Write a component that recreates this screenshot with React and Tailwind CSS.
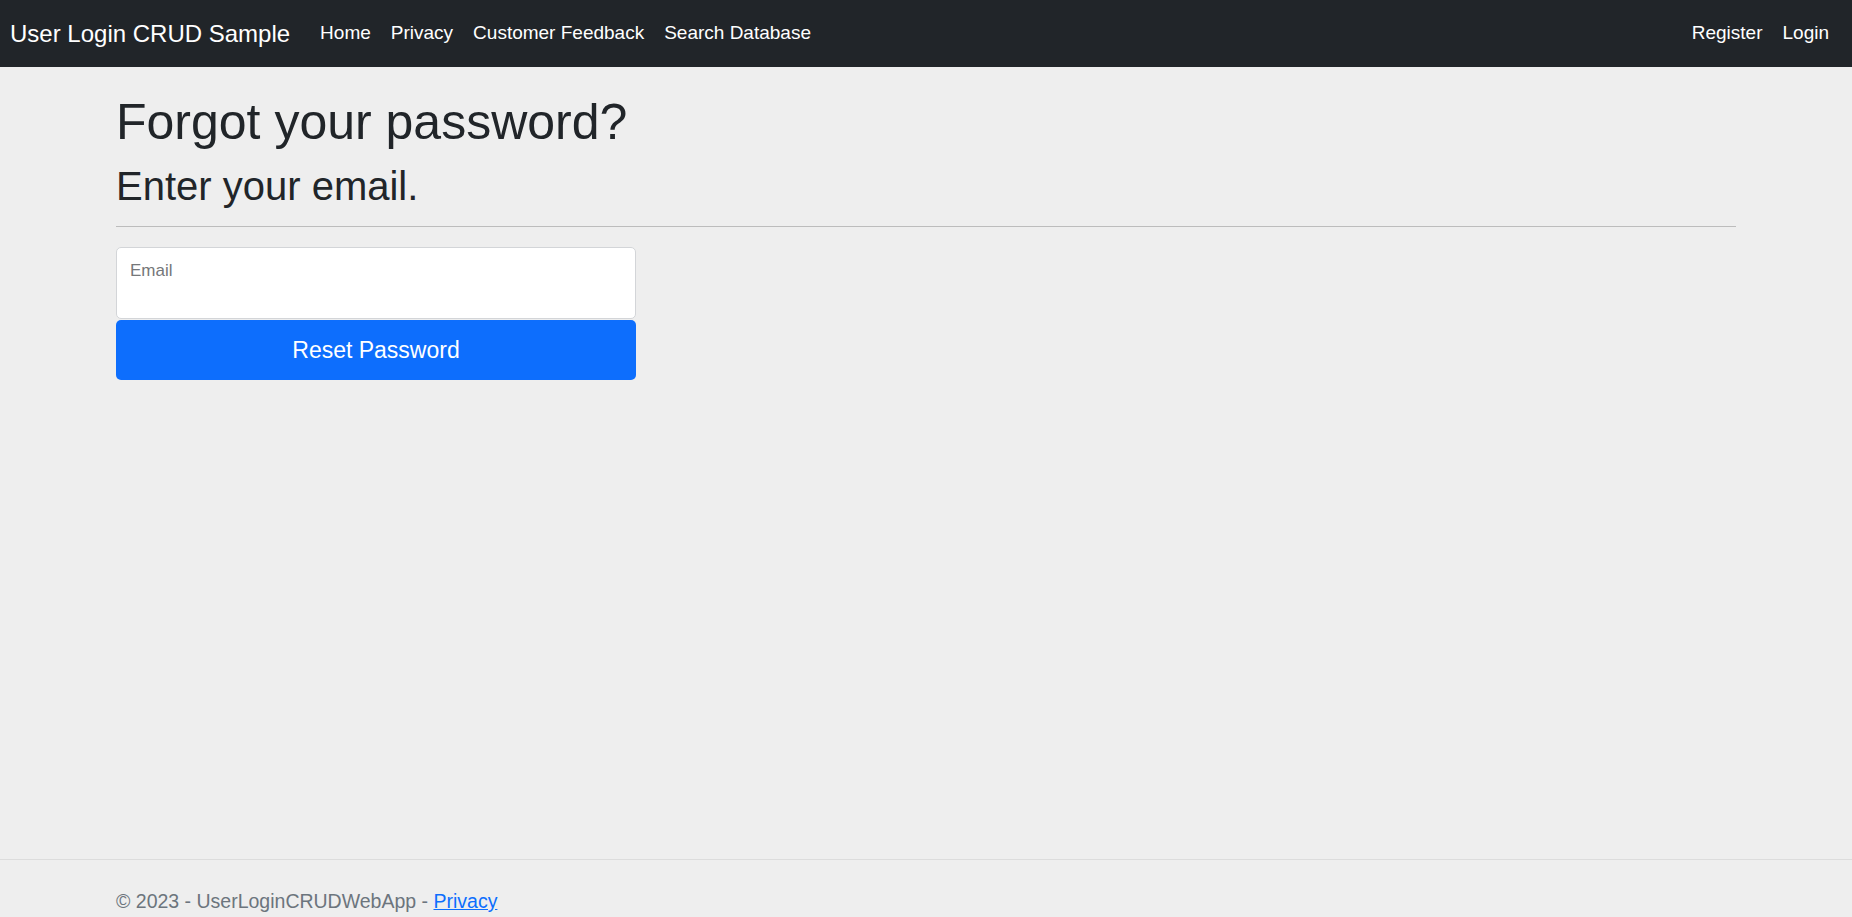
import { useState } from "react";

const navLinks = ["Home", "Privacy", "Customer Feedback", "Search Database"];

export default function App() {
  const [email, setEmail] = useState("");

  return (
    <div className="h-[917px] overflow-hidden bg-[#eeeeee] font-['Liberation_Sans',Arial,sans-serif] text-[#212529]">
      <nav className="flex h-[67px] items-center bg-[#212529] pr-[13px] pl-[10px] text-white">
        <a href="#" className="mr-[20px] text-[24px] leading-none">
          User Login CRUD Sample
        </a>
        <ul className="flex">
          {navLinks.map((link) => (
            <li key={link}>
              <a href="#" className="block px-[10px] text-[19px]">
                {link}
              </a>
            </li>
          ))}
        </ul>
        <ul className="ml-auto flex">
          <li>
            <a href="#" className="block px-[10px] text-[19px]">
              Register
            </a>
          </li>
          <li>
            <a href="#" className="block px-[10px] text-[19px]">
              Login
            </a>
          </li>
        </ul>
      </nav>

      <main className="mx-auto h-[792px] w-[1650px] px-[15px] pt-[21px]">
        <h1 className="mb-[10px] pt-[4px] text-[50px] leading-[1.2]">Forgot your password?</h1>
        <h2 className="text-[40px] leading-[1.2]">Enter your email.</h2>
        <hr className="mt-[16px] mb-[20px] border-0 border-t border-[#bcbcbc]" />
        <form className="w-[520px]" onSubmit={(e) => e.preventDefault()}>
          <div className="relative">
            <input
              type="email"
              value={email}
              onChange={(e) => setEmail(e.target.value)}
              className="block h-[72px] w-full rounded-[5px] border border-[#d3d5d8] bg-white px-[15px] pt-[30px] pb-[8px] text-[20px] outline-none"
            />
            <label className="pointer-events-none absolute left-[14px] top-[11px] text-[17px] text-[#75777a]">
              Email
            </label>
          </div>
          <button
            type="submit"
            className="mt-px block h-[60px] w-full rounded-[5px] bg-[#0d6efd] text-[23px] text-white"
          >
            Reset Password
          </button>
        </form>
      </main>

      <footer className="h-[75px] border-t border-[#dcdcdc] leading-[82px] text-[#6c757d]">
        <div className="mx-auto w-[1650px] px-[15px] text-[19.5px]">
          © 2023 - UserLoginCRUDWebApp -{" "}
          <a href="#" className="text-[#0d6efd] underline">
            Privacy
          </a>
        </div>
      </footer>
    </div>
  );
}
